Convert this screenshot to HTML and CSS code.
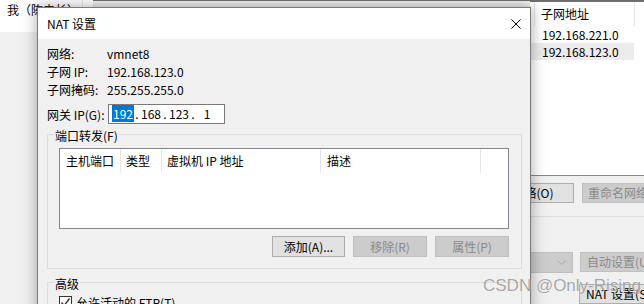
FILE: index.html
```html
<!DOCTYPE html>
<html lang="zh-CN">
<head>
    <meta charset="UTF-8">
    <meta name="viewport" content="width=device-width, initial-scale=1.0">
    <title>NAT 设置</title>
    <link rel="stylesheet" href="styles.css">
</head>
<body>
    <div class="screen">
        <div class="app">
            <div class="app-main">
                <div class="app-top">
                    <div class="name-cell">我（陈忠长）</div>
                    <div class="header-strip"></div>
                </div>
            </div>
            <div class="app-side">
                <div class="subnet-list">
                    <div class="list-head">
                        <div class="lead"></div>
                        <div class="head-cell">子网地址</div>
                    </div>
                    <div class="list-row">192.168.221.0</div>
                    <div class="list-row selected">192.168.123.0</div>
                </div>
                <div class="side-buttons">
                    <div class="side-row">
                        <div class="btn btn-wide">移除网络(O)</div>
                        <div class="btn disabled btn-rename">重命名网络(W)...</div>
                    </div>
                    <div class="side-rule"></div>
                    <div class="side-row row-auto">
                        <div class="combo disabled">
                            <svg width="9" height="6" viewBox="0 0 9 6"><path d="M0.5 0.5 L4.5 4.5 L8.5 0.5" fill="none" stroke="#a8a8a8" stroke-width="1"/></svg>
                        </div>
                        <div class="btn disabled btn-side">自动设置(U)...</div>
                    </div>
                    <div class="side-row row-nat">
                        <div class="btn btn-side">NAT 设置(S)...</div>
                    </div>
                </div>
            </div>
        </div>

        <div class="dialog">
            <div class="title-bar">
                <span class="title">NAT 设置</span>
                <svg class="close" width="10" height="10" viewBox="0 0 10 10"><path d="M0.5 0.5 L9.5 9.5 M9.5 0.5 L0.5 9.5" stroke="#000" stroke-width="1"/></svg>
            </div>
            <div class="dialog-body">
                <div class="info-row"><span class="label">网络:</span><span>vmnet8</span></div>
                <div class="info-row"><span class="label">子网 IP:</span><span>192.168.123.0</span></div>
                <div class="info-row"><span class="label">子网掩码:</span><span>255.255.255.0</span></div>
                <div class="gateway-row">
                    <span class="label gw-label">网关 IP(G):</span>
                    <div class="ip-box">
                        <span class="ip-field"><span class="sel">192</span></span><span class="ip-dot">.</span>
                        <span class="ip-field">168</span><span class="ip-dot">.</span>
                        <span class="ip-field">123</span><span class="ip-dot">.</span>
                        <span class="ip-field">1</span>
                    </div>
                </div>

                <fieldset class="group">
                    <legend>端口转发(F)</legend>
                    <div class="pf-list">
                        <div class="pf-head">
                            <div class="pf-col c1">主机端口</div>
                            <div class="pf-col c2">类型</div>
                            <div class="pf-col c3">虚拟机 IP 地址</div>
                            <div class="pf-col c4">描述</div>
                        </div>
                    </div>
                    <div class="pf-buttons">
                        <div class="btn b-add">添加(A)...</div>
                        <div class="btn disabled b-other">移除(R)</div>
                        <div class="btn disabled b-other">属性(P)</div>
                    </div>
                </fieldset>

                <fieldset class="group group-adv">
                    <legend>高级</legend>
                    <div class="check-row">
                        <span class="checkbox">
                            <svg width="11" height="11" viewBox="0 0 11 11"><path d="M1.5 5.5 L4.2 8.5 L9.5 1.5" fill="none" stroke="#222" stroke-width="1.3"/></svg>
                        </span>
                        <span>允许活动的 FTP(T)</span>
                    </div>
                </fieldset>
            </div>
        </div>

        <div class="watermark">CSDN @Only-Rising</div>
    </div>
</body>
</html>
```

FILE: styles.css
```css
* {
    box-sizing: border-box;
}

body {
    margin: 0;
    font-family: "Noto Sans CJK SC", sans-serif;
    font-size: 12px;
    color: #000;
}

.screen {
    position: relative;
    width: 644px;
    height: 304px;
    overflow: hidden;
    background-color: #f0f0f0;
}

/* background window */
.app {
    display: flex;
    height: 100%;
}

.app-main {
    width: 530px;
    flex-shrink: 0;
}

.app-top {
    display: flex;
    height: 32px;
    background-color: #fff;
}

.name-cell {
    width: 83px;
    padding-left: 7px;
    line-height: 20px;
    white-space: nowrap;
    overflow: hidden;
    border-right: 1px solid #e5e5e5;
}

.header-strip {
    flex: 1;
    margin-left: 10px;
    height: 8px;
    border-top: 1px solid #6e6e6e;
    background: linear-gradient(#f4f4f4, #e6e6e6);
}

.app-side {
    width: 114px;
    flex-shrink: 0;
    display: flex;
    flex-direction: column;
}

.subnet-list {
    height: 178px;
    background-color: #fff;
    border-top: 2px solid #6e6e6e;
    border-bottom: 1px solid #828790;
}

.list-head {
    display: flex;
    height: 24px;
}

.list-head .lead {
    width: 5px;
    border-right: 1px solid #e5e5e5;
}

.head-cell {
    width: 100px;
    padding-left: 6px;
    line-height: 24px;
    border-right: 1px solid #e5e5e5;
}

.list-row {
    width: 104px;
    height: 17px;
    line-height: 17px;
    padding-left: 12px;
}

.list-row.selected {
    background-color: #ececec;
}

.side-buttons {
    padding-top: 7px;
}

.side-row {
    display: flex;
    gap: 8px;
    height: 20px;
}

.side-rule {
    margin-top: 13px;
    height: 1px;
    background-color: #dcdcdc;
}

.row-auto {
    margin-top: 35px;
    gap: 7px;
}

.row-nat {
    margin-top: 12px;
    padding-left: 49px;
}

/* buttons */
.btn {
    height: 20px;
    line-height: 18px;
    border: 1px solid #adadad;
    background-color: #e1e1e1;
    text-align: center;
    white-space: nowrap;
    flex-shrink: 0;
}

.btn.disabled {
    background-color: #cccccc;
    border-color: #bfbfbf;
    color: #8a8a8a;
}

.btn-wide {
    width: 106px;
    margin-left: -62px;
}

.btn-rename {
    width: 90px;
    text-align: left;
    padding-left: 5px;
}

.btn-side {
    width: 90px;
    text-align: left;
    padding-left: 6px;
}

.combo {
    width: 43px;
    height: 21px;
    flex-shrink: 0;
    border: 1px solid #bfbfbf;
    background-color: #cccccc;
    display: flex;
    align-items: center;
    justify-content: flex-end;
    padding-right: 6px;
}

/* dialog */
.dialog {
    position: absolute;
    left: 37px;
    top: 7px;
    width: 494px;
    height: 330px;
    border: 1px solid #7a7a7a;
    background-color: #f0f0f0;
    box-shadow: 0 0 14px rgba(0, 0, 0, 0.35);
}

.title-bar {
    height: 31px;
    background-color: #fff;
    display: flex;
    align-items: center;
    justify-content: space-between;
    padding: 0 9px;
}

.title {
    line-height: 16px;
}

.dialog-body {
    padding: 6px 8px 0 9px;
}

.info-row {
    display: flex;
    height: 18px;
    line-height: 18px;
}

.label {
    width: 60px;
    flex-shrink: 0;
}

.gateway-row {
    display: flex;
    align-items: center;
    height: 20px;
    margin-top: 5px;
}

.gw-label {
    width: 61px;
}

.ip-box {
    width: 117px;
    height: 20px;
    border: 1px solid #7a7a7a;
    background-color: #fff;
    display: flex;
    padding-left: 3px;
    line-height: 18px;
}

.ip-field {
    width: 22px;
    text-align: center;
}

.ip-dot {
    width: 6px;
    text-align: center;
}

.sel {
    background-color: #0078d7;
    color: #fff;
    padding: 0 1px;
}

.group {
    margin: 0;
    padding: 4px 12px 11px 11px;
    border: 1px solid #dcdcdc;
    min-width: 0;
}

.group legend {
    padding: 4px 1px 0;
    margin-left: -5px;
    line-height: 16px;
}

.group-adv {
    margin-top: 3px;
}

.pf-list {
    height: 81px;
    border: 1px solid #828790;
    background-color: #fff;
}

.pf-head {
    display: flex;
    height: 24px;
}

.pf-col {
    line-height: 24px;
    padding-left: 6px;
    border-right: 1px solid #e5e5e5;
    white-space: nowrap;
}

.c1 { width: 61px; }
.c2 { width: 41px; padding-left: 5px; }
.c3 { width: 159px; padding-left: 5px; }
.c4 { width: 160px; }

.pf-buttons {
    display: flex;
    justify-content: flex-end;
    gap: 8px;
    margin-top: 7px;
}

.pf-buttons .btn {
    height: 21px;
    line-height: 19px;
}

.b-add { width: 73px; }
.b-other { width: 74px; }

.check-row {
    display: flex;
    align-items: flex-start;
    gap: 4px;
    line-height: 14px;
}

.checkbox {
    width: 13px;
    height: 13px;
    border: 1px solid #333;
    background-color: #fff;
    display: flex;
    align-items: center;
    justify-content: center;
}

.watermark {
    position: absolute;
    left: 483px;
    top: 276px;
    font-family: "Liberation Sans", sans-serif;
    font-size: 17px;
    line-height: 20px;
    color: rgba(105, 105, 105, 0.6);
    text-shadow: 0 0 1px #fff;
    white-space: nowrap;
}
```
